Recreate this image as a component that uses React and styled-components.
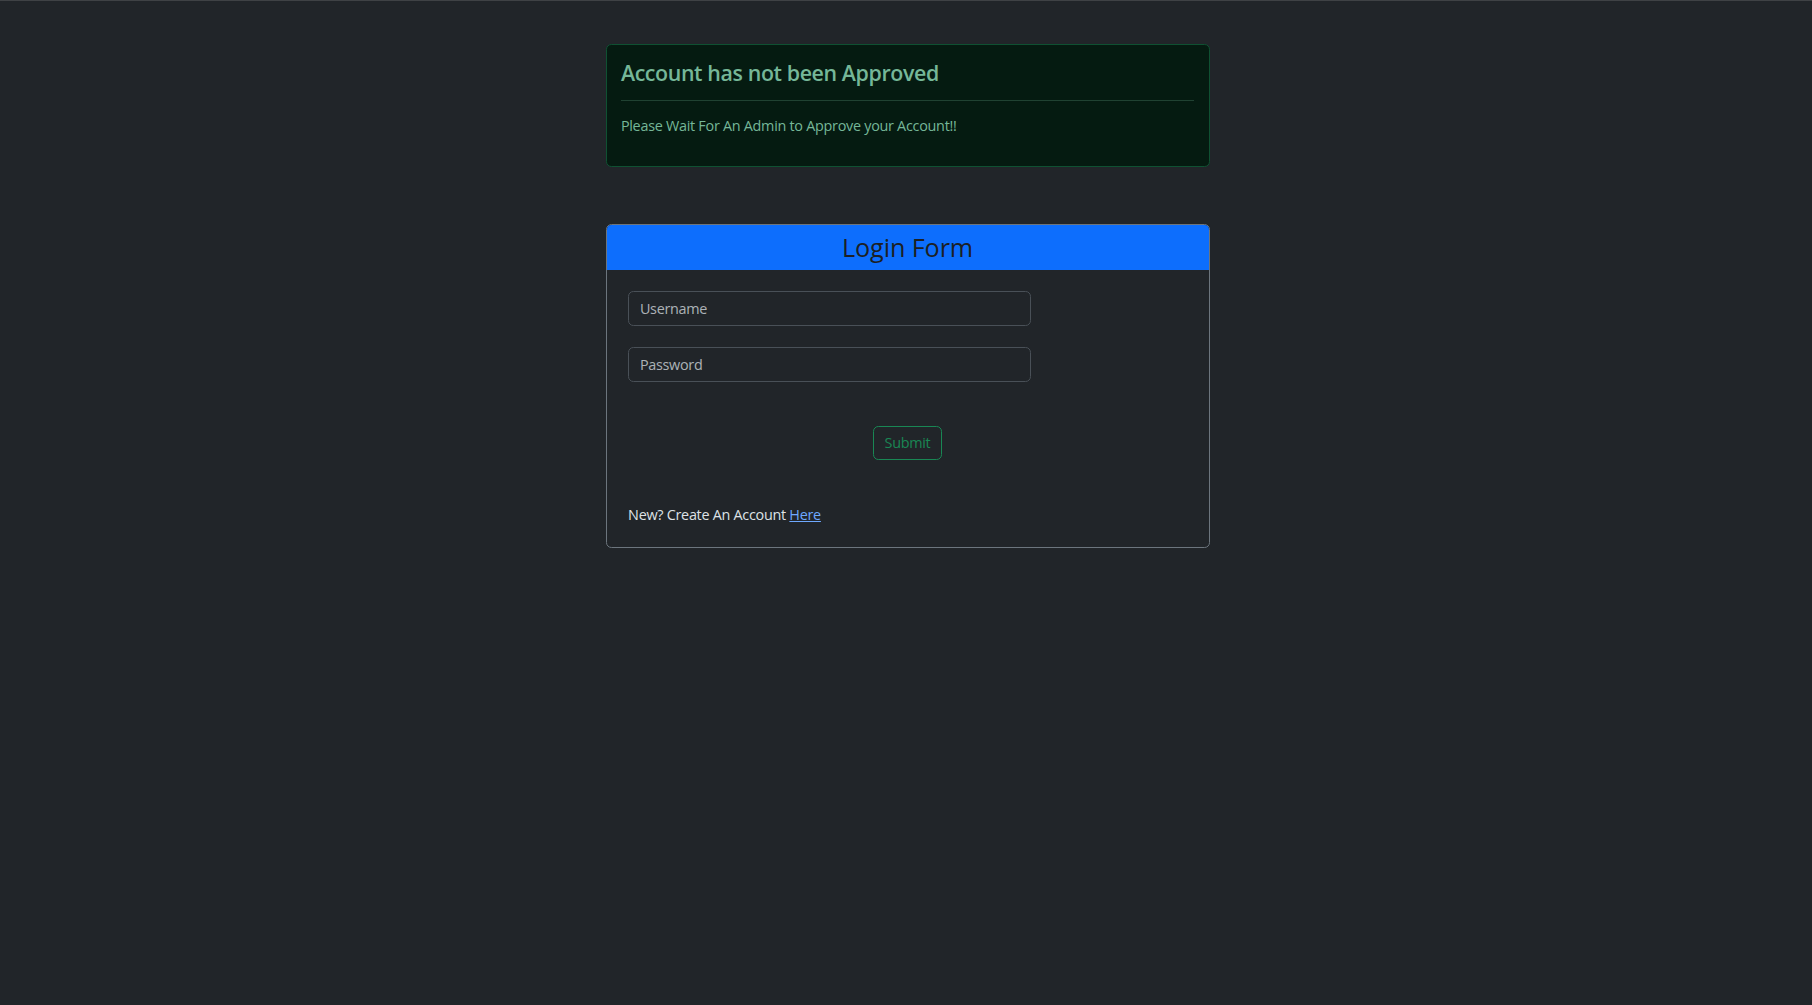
import React from "react";
import styled, { createGlobalStyle } from "styled-components";

const GlobalStyle = createGlobalStyle`
  html, body {
    margin: 0;
    padding: 0;
    background: #212529;
  }
  body {
    border-top: 1px solid #3f4245;
    min-height: 100vh;
    box-sizing: border-box;
    color: #dee2e6;
    font-family: "Open Sans", "Noto Sans", "Liberation Sans", sans-serif;
    font-size: 14.4px;
    line-height: 1.5;
  }
  *, *::before, *::after { box-sizing: border-box; }
`;

const Page = styled.main`
  width: 607px;
  margin: 0 auto;
  padding: 43.2px 0 0 3px;
  display: flex;
  flex-direction: column;
`;

const Alert = styled.section`
  background: #051b11;
  border: 1px solid #0f5132;
  border-radius: 5.4px;
  color: #75b798;
  padding: 14.4px;
  margin-bottom: 57.6px;
`;

const AlertHeading = styled.h4`
  margin: 0 0 14.4px;
  font-size: 21.4px;
  font-weight: 600;
  letter-spacing: -0.4px;
  line-height: 25.9px;
  color: inherit;
`;

const Divider = styled.hr`
  margin: 0 0 14.4px;
  border: 0;
  border-top: 1px solid #75b798;
  opacity: 0.25;
`;

const AlertText = styled.p`
  margin: 0 0 14.4px;
  font-size: 14.4px;
  letter-spacing: -0.28px;
  line-height: 1.5;
`;

const Card = styled.section`
  border: 1px solid #6c757d;
  border-radius: 5.4px;
  overflow: hidden;
`;

const CardHeader = styled.header`
  background: #0d6efd;
  padding: 7.2px 14.4px;
  text-align: center;
`;

const CardTitle = styled.h3`
  margin: 0;
  font-size: 25.2px;
  font-weight: 500;
  letter-spacing: -0.1px;
  line-height: 1.2;
  color: #1c1f23;
`;

const CardBody = styled.div`
  padding: 14.4px;
`;

const Form = styled.form`
  padding: 7.2px;
  display: flex;
  flex-direction: column;
`;

const Field = styled.input`
  width: 403px;
  height: 34.4px;
  padding: 5.4px 10.8px;
  margin-bottom: ${(p) => p.$gap || 0}px;
  font-family: inherit;
  font-size: 14.4px;
  letter-spacing: -0.28px;
  line-height: 1.5;
  color: #dee2e6;
  background: #212529;
  border: 1px solid #495057;
  border-radius: 5.4px;
  outline: none;
  &::placeholder {
    color: rgba(222, 226, 230, 0.75);
  }
`;

const SubmitRow = styled.div`
  display: flex;
  justify-content: center;
  margin: 43.7px 0 44.2px;
`;

const SubmitButton = styled.button`
  height: 34.4px;
  padding: 5.4px 10.8px;
  font-family: inherit;
  font-size: 14.4px;
  letter-spacing: -0.28px;
  line-height: 1.5;
  color: #198754;
  background: transparent;
  border: 1px solid #198754;
  border-radius: 5.4px;
  cursor: pointer;
`;

const Footnote = styled.p`
  margin: 0;
  font-size: 14.4px;
  letter-spacing: -0.28px;
  line-height: 1.5;
  color: #dee2e6;
`;

const Link = styled.a`
  color: #6ea8fe;
  text-decoration: underline;
`;

export default function App() {
  return (
    <>
      <GlobalStyle />
      <Page>
        <Alert role="alert">
          <AlertHeading>Account has not been Approved</AlertHeading>
          <Divider />
          <AlertText>Please Wait For An Admin to Approve your Account!!</AlertText>
        </Alert>
        <Card>
          <CardHeader>
            <CardTitle>Login Form</CardTitle>
          </CardHeader>
          <CardBody>
            <Form onSubmit={(e) => e.preventDefault()}>
              <Field type="text" placeholder="Username" $gap={21.6} />
              <Field type="password" placeholder="Password" />
              <SubmitRow>
                <SubmitButton type="submit">Submit</SubmitButton>
              </SubmitRow>
              <Footnote>
                New? Create An Account <Link href="#">Here</Link>
              </Footnote>
            </Form>
          </CardBody>
        </Card>
      </Page>
    </>
  );
}
